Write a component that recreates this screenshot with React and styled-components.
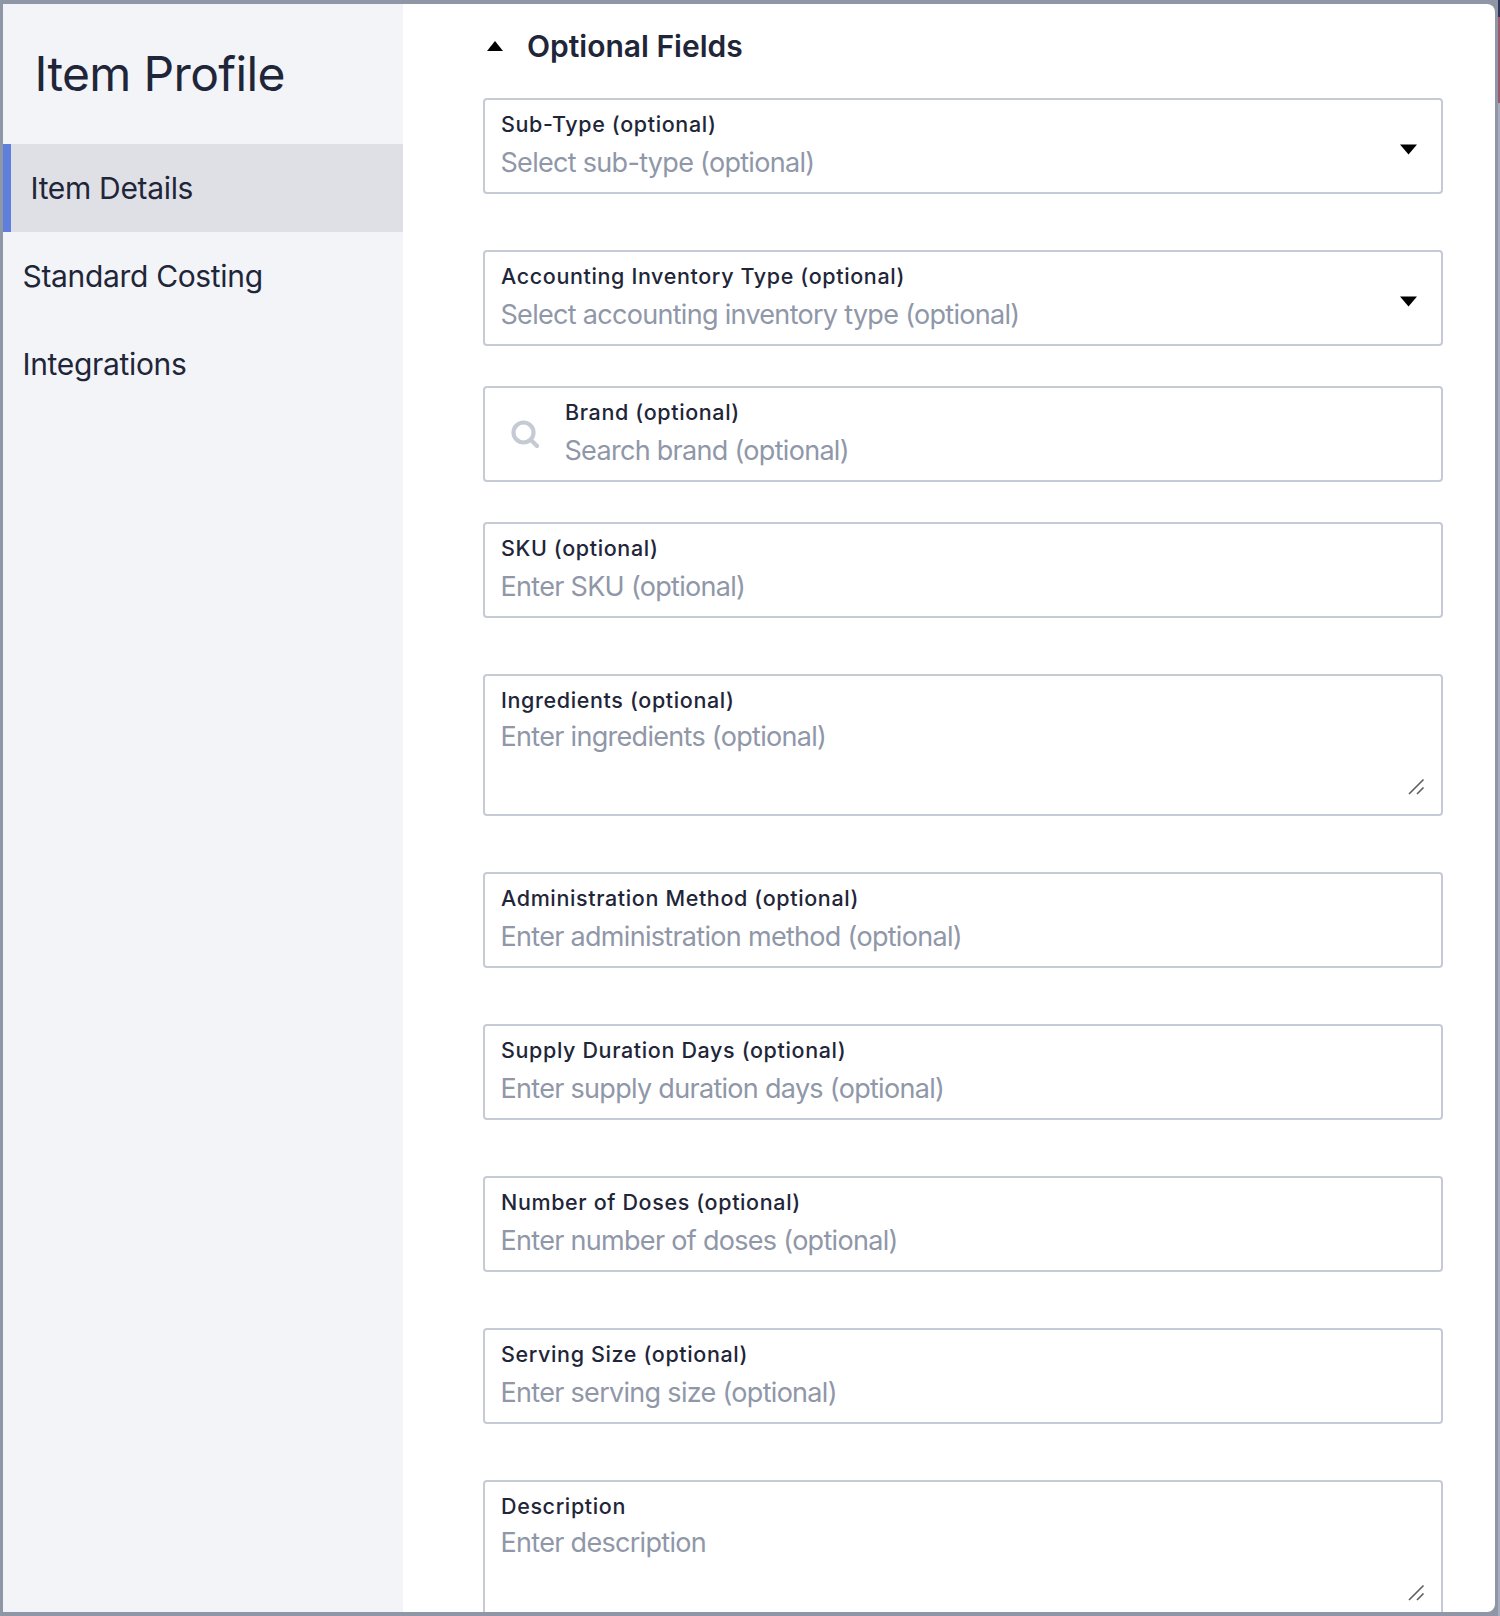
import React from 'react';
import styled, { createGlobalStyle } from 'styled-components';

const GlobalStyle = createGlobalStyle`
  html, body {
    margin: 0;
    padding: 0;
    background: #8f97a6;
    font-family: Inter, "Liberation Sans", sans-serif;
  }
`;

const TEXT = '#1f2639';

const Frame = styled.div`
  box-sizing: border-box;
  width: 1500px;
  height: 1616px;
  padding: 4px 5px 4px 3px;
  overflow: hidden;
  background: linear-gradient(to bottom, #2b3357 0 17px, #9a5a6b 17px 103px, #a8adbf 103px) right top / 2px 100% no-repeat, #8f97a6;
`;

const Window = styled.div`
  display: flex;
  height: 100%;
  background: #fff;
  border-radius: 0 8px 8px 0;
  overflow: hidden;
`;

const Sidebar = styled.aside`
  flex: 0 0 400px;
  background: #f3f4f8;
`;

const Title = styled.h1`
  margin: 0;
  height: 140px;
  padding: 37px 0 0 31.5px;
  box-sizing: border-box;
  font-size: 48px;
  line-height: 66px;
  font-weight: 400;
  letter-spacing: -0.65px;
  color: ${TEXT};
`;

const NavItem = styled.div`
  box-sizing: border-box;
  height: 88px;
  display: flex;
  align-items: center;
  padding-left: 19.5px;
  font-size: 30px;
  font-weight: 400;
  letter-spacing: -0.33px;
  color: ${TEXT};
  background: ${(p) => (p.$active ? '#dfe0e5' : 'transparent')};
  border-left: ${(p) => (p.$active ? '8px solid #5f7fdc' : 'none')};
`;

const Main = styled.main`
  flex: 1;
  padding: 0 52px 0 80px;
  overflow: hidden;
`;

const SectionHead = styled.div`
  display: flex;
  align-items: center;
  height: 94px;
  padding-bottom: 10px;
  box-sizing: border-box;
  font-size: 30px;
  font-weight: 600;
  color: ${TEXT};
`;

const HeadCaret = styled.svg`
  display: block;
  flex: none;
  width: 18px;
  height: 12px;
  margin: 0 23px 0 3px;
`;

const Field = styled.div`
  box-sizing: border-box;
  position: relative;
  display: flex;
  width: 960px;
  height: ${(p) => (p.$area ? '142px' : '96px')};
  margin-bottom: ${(p) => (p.$gap ? `${p.$gap}px` : '40px')};
  padding: ${(p) => (p.$area ? '9px 16px' : '0 16px 2px')};
  border: 2px solid #c6cad5;
  border-radius: 4px;
  align-items: ${(p) => (p.$area ? 'flex-start' : 'center')};
`;

const FieldText = styled.div`
  flex: 1;
  min-width: 0;
  display: flex;
  flex-direction: column;
  gap: ${(p) => (p.$area ? '3px' : '5px')};
`;

const Label = styled.div`
  font-size: 21.5px;
  line-height: 30px;
  font-weight: 500;
  letter-spacing: 0.63px;
  color: ${TEXT};
`;

const Placeholder = styled.div`
  margin-left: -0.5px;
  font-size: 27px;
  line-height: 38px;
  font-weight: 400;
  letter-spacing: -0.7px;
  color: #8f97a8;
`;

const SelectCaret = styled.svg`
  display: block;
  flex: none;
  width: 17px;
  height: 11px;
  margin: 8px 8px 0 0;
`;

const SearchIcon = styled.svg`
  display: block;
  flex: none;
  width: 28px;
  height: 28px;
  margin: 2px 26px 0 10px;
`;

const Grip = styled.svg`
  position: absolute;
  right: 16px;
  bottom: 18px;
  width: 18px;
  height: 18px;
`;

const DownCaret = () => (
  <SelectCaret viewBox="0 0 17 11">
    <path d="M0 0.5 H17 L8.5 10.5 Z" fill="#000" />
  </SelectCaret>
);

const ResizeGrip = () => (
  <Grip viewBox="0 0 18 18">
    <path d="M2 16 L16.5 1.5 M10 16 L16.5 9.5" stroke="#5f5f5f" strokeWidth="1.6" fill="none" />
  </Grip>
);

const fields = [
  { label: 'Sub-Type (optional)', hint: 'Select sub-type (optional)', select: true, gap: 56 },
  { label: 'Accounting Inventory Type (optional)', hint: 'Select accounting inventory type (optional)', select: true },
  { label: 'Brand (optional)', hint: 'Search brand (optional)', search: true },
  { label: 'SKU (optional)', hint: 'Enter SKU (optional)', gap: 56 },
  { label: 'Ingredients (optional)', hint: 'Enter ingredients (optional)', area: true, gap: 56 },
  { label: 'Administration Method (optional)', hint: 'Enter administration method (optional)', gap: 56 },
  { label: 'Supply Duration Days (optional)', hint: 'Enter supply duration days (optional)', gap: 56 },
  { label: 'Number of Doses (optional)', hint: 'Enter number of doses (optional)', gap: 56 },
  { label: 'Serving Size (optional)', hint: 'Enter serving size (optional)', gap: 56 },
  { label: 'Description', hint: 'Enter description', area: true },
];

export default function App() {
  return (
    <Frame>
      <GlobalStyle />
      <Window>
        <Sidebar>
          <Title>Item Profile</Title>
          <NavItem $active>Item Details</NavItem>
          <NavItem>Standard Costing</NavItem>
          <NavItem>Integrations</NavItem>
        </Sidebar>
        <Main>
          <SectionHead>
            <HeadCaret viewBox="0 0 18 12">
              <path d="M9 1 L17 11 H1 Z" fill="#000" />
            </HeadCaret>
            Optional Fields
          </SectionHead>
          {fields.map((f) => (
            <Field key={f.label} $area={f.area} $gap={f.gap}>
              {f.search && (
                <SearchIcon viewBox="0 0 28 28">
                  <circle cx="12.5" cy="12.5" r="10" stroke="#c6cad5" strokeWidth="4.2" fill="none" />
                  <path d="M20 20 L26 26" stroke="#c6cad5" strokeWidth="4.2" strokeLinecap="round" />
                </SearchIcon>
              )}
              <FieldText $area={f.area}>
                <Label>{f.label}</Label>
                <Placeholder>{f.hint}</Placeholder>
              </FieldText>
              {f.select && <DownCaret />}
              {f.area && <ResizeGrip />}
            </Field>
          ))}
        </Main>
      </Window>
    </Frame>
  );
}
